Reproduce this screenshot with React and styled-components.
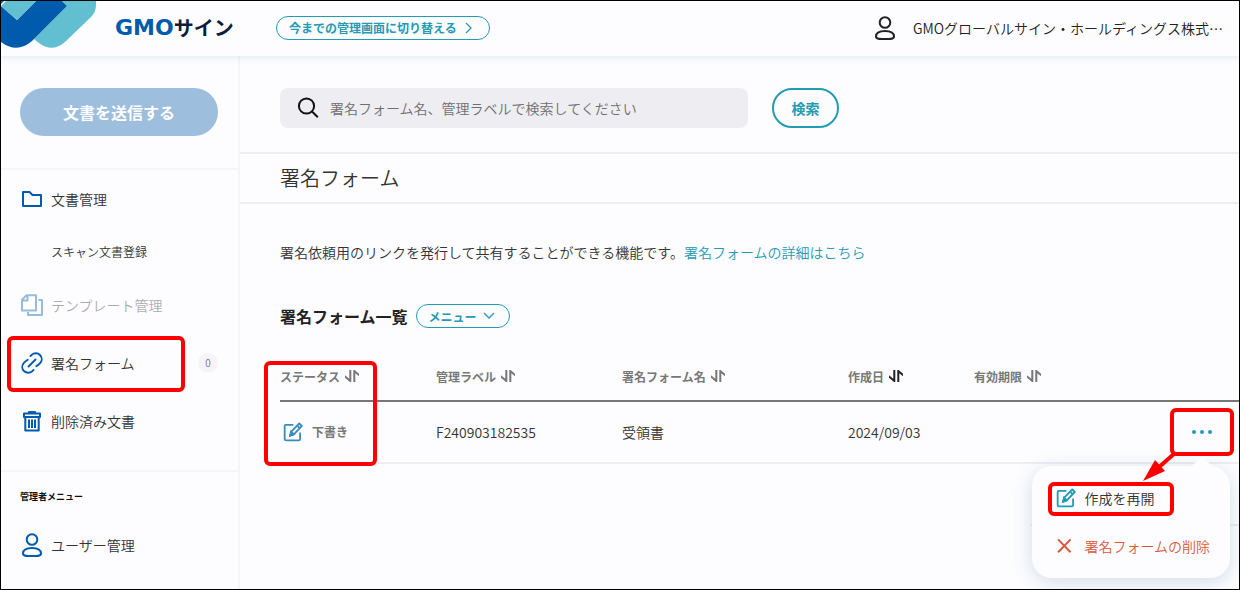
import React from 'react';
import styled, { createGlobalStyle } from 'styled-components';


// global
const GlobalStyle = createGlobalStyle`
  *, *::before, *::after {
    box-sizing: border-box;
  }

  body {
    margin: 0;
    background: #fdfdff;
    color: #333;
    font-family: "Noto Sans CJK JP", sans-serif;
    font-size: 14px;
    font-weight: 350;
    line-height: 24px;
  }

  button, input {
    font-family: inherit;
    font-weight: inherit;
  }

  a {
    color: inherit;
    text-decoration: none;
  }
`


// styled-components
const Page = styled.div`
  display: flex;
  flex-direction: column;
  min-height: 100vh;
  border: 1px solid #000;
  overflow: hidden;
`

const Header = styled.header`
  display: flex;
  align-items: center;
  height: 55px;
  padding: 0 16px 2px 0;
  box-shadow: 0 2px 6px rgba(50, 120, 130, 0.12);
  z-index: 1;
`

const Brand = styled.a`
  display: flex;
  align-items: center;
  gap: 18px;
  align-self: stretch;
  width: 275px;

  svg {
    align-self: flex-start;
    flex-shrink: 0;
  }
`

const BrandName = styled.span`
  display: flex;
  align-items: center;
  color: #0b1d3a;
  font-size: 20px;
  font-weight: 700;
  line-height: 24px;

  b {
    color: #005bac;
    font-family: "DejaVu Sans", sans-serif;
    font-size: 22px;
    font-weight: 700;
  }
`

const Pill = styled.button`
  display: inline-flex;
  align-items: center;
  gap: ${props => props.$gap || 8}px;
  height: 24px;
  padding: 0 ${props => props.$end || 16}px 0 12px;
  border: 1px solid #239bb3;
  border-radius: 12px;
  background: transparent;
  color: #239bb3;
  font-size: 12px;
  font-weight: 700;
  cursor: pointer;
`

const Account = styled.a`
  display: flex;
  align-items: center;
  gap: 16px;
  margin-left: auto;
  color: #222;
`

const Body = styled.div`
  display: flex;
  flex: 1;
`

const Sidebar = styled.aside`
  flex: 0 0 239px;
  border-right: 2px solid #f5f5f8;
`

const SideSection = styled.div`
  padding: ${props => props.$pad || '0'};
  border-bottom: ${props => (props.$last ? '0' : '2px solid #f5f5f8')};
`

const SendButton = styled.button`
  display: block;
  width: 100%;
  height: 48px;
  border: 0;
  border-radius: 24px;
  background: #9ebedd;
  color: #fdfdff;
  font-size: 16px;
  font-weight: 700;
`

const SideTitle = styled.h2`
  margin: 0;
  padding: 18px 19px 12px;
  color: #111;
  font-size: 9px;
  font-weight: 700;
  line-height: 14px;
`

const List = styled.ul`
  margin: 0;
  padding: 0;
  list-style: none;
`

const NavItem = styled.li`
  display: flex;
  align-items: center;
  justify-content: space-between;
  height: ${props => (props.$sub ? 48 : 58)}px;
  padding: 0 20px 0 ${props => (props.$sub ? 50 : 19)}px;
  font-size: ${props => (props.$sub ? 12 : 14)}px;
`

const NavLink = styled.a`
  position: relative;
  display: flex;
  align-items: center;
  gap: 7px;
  opacity: ${props => (props.$disabled ? 0.4 : 1)};

  svg {
    color: #005bac;
  }
`

const Badge = styled.span`
  width: 20px;
  border-radius: 10px;
  background: #f5f5f8;
  color: #777;
  font-size: 10px;
  line-height: 20px;
  text-align: center;
`

const Main = styled.main`
  flex: 1;
  min-width: 0;
`

const SearchBar = styled.form`
  display: flex;
  gap: 24px;
  padding: 32px 40px 24px;
  border-bottom: 2px solid #eeeef2;
`

const SearchField = styled.label`
  display: flex;
  align-items: center;
  gap: 10px;
  flex: 0 1 468px;
  height: 40px;
  padding: 0 16px;
  border-radius: 8px;
  background: #eeedf2;
  color: #111;
`

const SearchInput = styled.input`
  flex: 1;
  min-width: 0;
  padding: 0;
  border: 0;
  outline: 0;
  background: transparent;
  font-size: 14px;

  &::placeholder {
    color: #6f6f6f;
    opacity: 1;
  }
`

const SearchButton = styled.button`
  min-width: 67px;
  height: 40px;
  padding: 0 16px;
  border: 2px solid #239bb3;
  border-radius: 20px;
  background: transparent;
  color: #239bb3;
  font-size: 14px;
  font-weight: 700;
`

const Title = styled.h1`
  margin: 0;
  padding: 0 40px;
  border-bottom: 2px solid #eeeef2;
  font-size: 20px;
  font-weight: 350;
  line-height: 48px;
`

const Content = styled.section`
  padding: 36px 0 0 40px;
`

const Lead = styled.p`
  margin: 0;

  a {
    color: #239bb3;
  }
`

const ListHeading = styled.div`
  display: flex;
  align-items: center;
  gap: 8px;
  margin: 40px 0 24px;
`

const ListTitle = styled.h2`
  margin: 0;
  color: #222;
  font-size: 16px;
  font-weight: 700;
`

const Table = styled.table`
  width: 100%;
  table-layout: fixed;
  border-collapse: separate;
  border-spacing: 0;
`

const HeadCell = styled.th`
  position: relative;
  width: ${props => props.$width || 'auto'};
  height: 50px;
  padding: 0;
  border-bottom: 2px solid #77777a;
  text-align: left;
`

const SortButton = styled.button`
  display: flex;
  align-items: center;
  gap: 5px;
  padding: 0;
  border: 0;
  background: transparent;
  color: #777;
  font-size: 12px;
  font-weight: 700;
  white-space: nowrap;

  svg {
    flex-shrink: 0;
    color: ${props => (props.$active ? '#222' : '#777')};
  }
`

const Cell = styled.td`
  height: 62px;
  padding: 0;
  border-bottom: ${props => (props.$plain ? '0' : '2px solid #eeeef2')};
`

const Status = styled.span`
  display: flex;
  align-items: center;
  gap: 9px;
  padding-left: 3px;
  color: #777;
  font-size: 12px;
  font-weight: 700;

  svg {
    color: #3a8dbb;
  }
`

const Actions = styled.div`
  position: relative;
  width: 56px;
  height: 40px;
  margin: 0 9px 0 auto;
`

const DotsButton = styled.button`
  display: flex;
  align-items: center;
  justify-content: center;
  width: 100%;
  height: 100%;
  padding: 0;
  border: 0;
  background: transparent;
  color: #239bb3;
`

const Popup = styled.div`
  position: absolute;
  top: 54px;
  right: 0;
  display: flex;
  flex-direction: column;
  padding: 8px 20px 8px 24px;
  border-radius: 20px;
  background: #fdfdff;
  box-shadow: 0 4px 20px rgba(40, 90, 130, 0.2);

  &::before {
    content: "";
    position: absolute;
    top: -10px;
    right: 18px;
    border: 10px solid transparent;
    border-top: 0;
    border-bottom-color: #fdfdff;
  }
`

const PopupItem = styled.button`
  display: flex;
  align-items: center;
  height: 48px;
  padding: 0;
  border: 0;
  background: transparent;
  color: ${props => (props.$danger ? '#d9583b' : '#333')};
  font-size: 14px;
  line-height: 24px;
  white-space: nowrap;

  svg {
    color: ${props => (props.$danger ? '#d9583b' : '#239bb3')};
  }
`

const PopupLabel = styled.span`
  position: relative;
  display: flex;
  align-items: center;
  gap: 8px;
`

const Highlight = styled.span`
  position: absolute;
  inset: ${props => props.$inset};
  height: ${props => props.$height || 'auto'};
  border: 4px solid #f00;
  border-radius: 6px;
  pointer-events: none;
`

const Arrow = styled.svg`
  position: absolute;
  top: 38px;
  left: -32px;
  z-index: 1;
`


// icons
const Icon = ({ size = 24, stroke = 2, children }) => (
  <svg
    width={size}
    height={size}
    viewBox="0 0 24 24"
    fill="none"
    stroke="currentColor"
    strokeWidth={stroke}
    aria-hidden="true"
  >
    {children}
  </svg>
);

const LogoMark = () => (
  <svg width="96" height="48" viewBox="1 1 96 48" aria-hidden="true">
    <path d="M62 1H96V5Q96 12 91 17L65 42Q52 53 39 43L34 39L67 6Z" fill="#62bfd1" />
    <path d="M1 6L17 20L36 1H62L67 6L32 41Q17 54 1 42Z" fill="#005bac" />
    <path d="M1 6L6 1H36L17 20Z" fill="#62bfd1" />
    <path d="M1 1H4L1 4Z" fill="#005bac" />
  </svg>
);

const UserIcon = () => (
  <Icon>
    <circle cx="12" cy="6.5" r="5.3" />
    <path d="M12 15C6 15 3 17.5 3 20.5C3 23 6 23 12 23C18 23 21 23 21 20.5C21 17.5 18 15 12 15Z" />
  </Icon>
);

const FolderIcon = () => (
  <Icon>
    <path d="M3 5H9.5L12.5 8H21V19H3Z" strokeLinejoin="round" />
  </Icon>
);

const TemplateIcon = () => (
  <Icon>
    <path d="M6.5 2.2H16V17.5H2V6.7ZM7.5 2.5V7.5H2.5" strokeLinejoin="round" />
    <path d="M18.5 7H22V22H8V19" strokeLinejoin="round" />
  </Icon>
);

const LinkIcon = () => (
  <Icon stroke={1.9}>
    <path d="M8.5 15.5L15.5 8.5" strokeLinecap="round" />
    <path d="M10.5 5L11.7 3.9C14 1.7 17.7 1.7 20 4C22.3 6.3 22.3 9.8 20.1 12.2C18.9 13.5 17.8 14.6 16.3 15.2" strokeLinecap="round" />
    <path d="M13.5 19L12.3 20.1C10 22.3 6.3 22.3 4 20C1.7 17.7 1.7 14.2 3.9 11.8C5.1 10.5 6.2 9.4 7.7 8.8" strokeLinecap="round" />
  </Icon>
);

const TrashIcon = () => (
  <Icon>
    <path d="M4 4.5H20V8H4ZM9 4V3H15V4M5.3 8V21.5H18.7V8" strokeLinejoin="round" />
    <path d="M9 10.5V19M12 10.5V19M15 10.5V19" />
  </Icon>
);

const SearchIcon = () => (
  <Icon>
    <circle cx="10.5" cy="10" r="7.6" />
    <path d="M16 15.5L21.8 21.3" />
  </Icon>
);

const EditIcon = () => (
  <Icon size={20} stroke={2.2}>
    <path d="M12.5 3.5H3.5Q2 3.5 2 5V20.5Q2 22 3.5 22H19Q20.5 22 20.5 20.5V12.5" />
    <path d="M8.5 16.5L9.8 11.5L19.5 1.8L22.5 4.8L13 14.8Z M17 4.3L20 7.3" strokeLinejoin="round" />
    <path d="M8.5 16.5L9.8 11.5L13 14.8Z" fill="currentColor" />
  </Icon>
);

const CrossIcon = () => (
  <Icon size={20} stroke={2.4}>
    <path d="M2.5 4L17.5 19.5M17.5 4L2.5 19.5" />
  </Icon>
);

const SortIcon = () => (
  <svg width="14" height="12" viewBox="0 0 14 12" fill="currentColor" aria-hidden="true">
    <path d="M4.3 0H6.3V12H5L0 7.8V5.3L4.3 8.8Z" />
    <path d="M10.3 12H8.3V0H9.6L14.5 4.2V6.7L10.3 3.2Z" />
  </svg>
);

const DotsIcon = () => (
  <svg width="24" height="6" viewBox="0 0 24 6" fill="currentColor" aria-hidden="true">
    <circle cx="4" cy="3" r="2" />
    <circle cx="12" cy="3" r="2" />
    <circle cx="20" cy="3" r="2" />
  </svg>
);


// data
const documents = [
  { label: '文書管理', icon: FolderIcon },
  { label: 'スキャン文書登録', sub: true },
  { label: 'テンプレート管理', icon: TemplateIcon, disabled: true },
  { label: '署名フォーム', icon: LinkIcon, marked: true, count: 0 },
  { label: '削除済み文書', icon: TrashIcon },
];

const admin = [{ label: 'ユーザー管理', icon: UserIcon }];

const columns = [
  { label: 'ステータス', width: '156px', marked: true },
  { label: '管理ラベル', width: '186px' },
  { label: '署名フォーム名', width: '226px' },
  { label: '作成日', width: '126px', active: true },
  { label: '有効期限' },
];


// components
const Nav = ({ items }) => (
  <List>
    {items.map(({ label, icon: Glyph, sub, disabled, marked, count }) => (
      <NavItem key={label} $sub={sub}>
        <NavLink href="#" $disabled={disabled}>
          {Glyph && <Glyph />}
          {label}
          {marked && <Highlight $inset="-15px -50px -17px -13px" />}
        </NavLink>
        {count !== undefined && <Badge>{count}</Badge>}
      </NavItem>
    ))}
  </List>
);

const RowActions = () => (
  <Actions>
    <DotsButton type="button" aria-label="操作">
      <DotsIcon />
    </DotsButton>
    <Popup>
      <PopupItem type="button">
        <PopupLabel>
          <EditIcon />
          作成を再開
          <Highlight $inset="-4px -20px -6px -8px" />
        </PopupLabel>
      </PopupItem>
      <PopupItem type="button" $danger>
        <PopupLabel>
          <CrossIcon />
          署名フォームの削除
        </PopupLabel>
      </PopupItem>
    </Popup>
    <Highlight $inset="-4px" />
    <Arrow width="36" height="34" viewBox="0 0 36 34" aria-hidden="true">
      <path d="M33 3L16 18" stroke="#f00" strokeWidth="4" />
      <path d="M1 31L13 10L23 21Z" fill="#f00" />
    </Arrow>
  </Actions>
);

const App = () => (
  <Page>
    <GlobalStyle />
    <Header>
      <Brand href="#">
        <LogoMark />
        <BrandName><b>GMO</b>サイン</BrandName>
      </Brand>
      <Pill type="button">
        今までの管理画面に切り替える
        <svg width="8" height="12" viewBox="0 0 8 12" fill="none" stroke="currentColor" strokeWidth="1.3" aria-hidden="true">
          <path d="M1 1L6 6L1 11" />
        </svg>
      </Pill>
      <Account href="#">
        <UserIcon />
        GMOグローバルサイン・ホールディングス株式…
      </Account>
    </Header>
    <Body>
      <Sidebar>
        <SideSection $pad="32px 20px 32px 19px">
          <SendButton type="button">文書を送信する</SendButton>
        </SideSection>
        <SideSection $pad="0 0 20px">
          <Nav items={documents} />
        </SideSection>
        <SideSection $last>
          <SideTitle>管理者メニュー</SideTitle>
          <Nav items={admin} />
        </SideSection>
      </Sidebar>
      <Main>
        <SearchBar>
          <SearchField>
            <SearchIcon />
            <SearchInput
              type="text"
              aria-label="検索"
              placeholder="署名フォーム名、管理ラベルで検索してください"
            />
          </SearchField>
          <SearchButton type="button">検索</SearchButton>
        </SearchBar>
        <Title>署名フォーム</Title>
        <Content>
          <Lead>
            署名依頼用のリンクを発行して共有することができる機能です。<a href="#">署名フォームの詳細はこちら</a>
          </Lead>
          <ListHeading>
            <ListTitle>署名フォーム一覧</ListTitle>
            <Pill type="button" $gap={6} $end={14}>
              メニュー
              <svg width="12" height="8" viewBox="0 0 12 8" fill="none" stroke="currentColor" strokeWidth="1.3" aria-hidden="true">
                <path d="M1 1L6 6L11 1" />
              </svg>
            </Pill>
          </ListHeading>
          <Table>
            <thead>
              <tr>
                {columns.map(({ label, width, marked, active }) => (
                  <HeadCell key={label} $width={width}>
                    <SortButton type="button" $active={active}>
                      {label}
                      <SortIcon />
                    </SortButton>
                    {marked && <Highlight $inset="9px 59px auto -16px" $height="105px" />}
                  </HeadCell>
                ))}
                <HeadCell $width="208px" />
              </tr>
            </thead>
            <tbody>
              <tr>
                <Cell>
                  <Status>
                    <EditIcon />
                    下書き
                  </Status>
                </Cell>
                <Cell>F240903182535</Cell>
                <Cell>受領書</Cell>
                <Cell>2024/09/03</Cell>
                <Cell />
                <Cell><RowActions /></Cell>
              </tr>
              <tr>
                <Cell colSpan={5} $plain />
                <Cell />
              </tr>
            </tbody>
          </Table>
        </Content>
      </Main>
    </Body>
  </Page>
);


export default App;
